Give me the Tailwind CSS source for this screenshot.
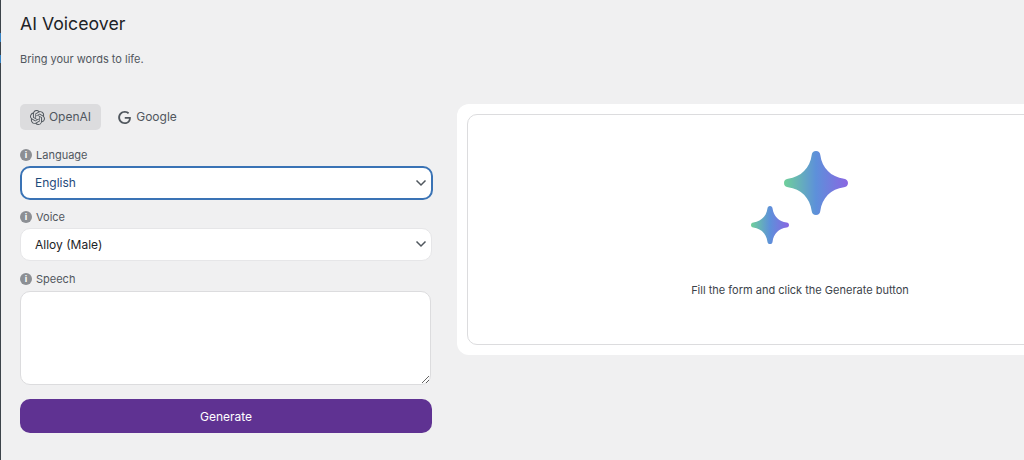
<!DOCTYPE html>
<html lang="en">
<head>
  <meta charset="UTF-8">
  <title>AI Voiceover</title>
  <script src="https://cdn.jsdelivr.net/npm/@tailwindcss/browser@4"></script>
</head>
<body class="bg-[#f0f0f1] overflow-hidden font-['Inter',sans-serif] antialiased">
<div class="flex h-[460px] w-[1024px] overflow-hidden">

  <!-- Admin menu edge -->
  <div class="w-px shrink-0 bg-[#3c434a] flex flex-col">
    <div class="h-[33px]"></div>
    <div class="h-[9px] bg-[#3582c4]"></div>
    <div class="h-[13px]"></div>
    <div class="h-[8px] bg-[#3582c4]"></div>
  </div>

  <div class="flex-1 pl-[19px] min-w-0">
    <!-- Header -->
    <h1 class="pt-[10px] text-[17.700px] leading-[28px] font-normal text-[#1d2327]">AI Voiceover</h1>
    <p class="mt-[14px] text-[11px] leading-[14px] text-[#50575e]">Bring your words to life.</p>

    <div class="mt-[38px] flex gap-[25px] items-start">
      <!-- Form column -->
      <div class="w-[412px] shrink-0">
        <div class="flex gap-[6px] text-[12px] text-[#50575e]">
          <button class="h-[26px] w-[81px] rounded-[5px] bg-[#dcdcde] flex items-center justify-center gap-[4px]">
            <svg class="w-[15px] h-[15px]" viewBox="0 0 24 24" fill="#50575e"><path d="M22.2819 9.8211a5.9847 5.9847 0 0 0-.5157-4.9108 6.0462 6.0462 0 0 0-6.5098-2.9A6.0651 6.0651 0 0 0 4.9807 4.1818a5.9847 5.9847 0 0 0-3.9977 2.9 6.0462 6.0462 0 0 0 .7427 7.0966 5.98 5.98 0 0 0 .511 4.9107 6.051 6.051 0 0 0 6.5146 2.9001A5.9847 5.9847 0 0 0 13.2599 24a6.0557 6.0557 0 0 0 5.7718-4.2058 5.9894 5.9894 0 0 0 3.9977-2.9001 6.0557 6.0557 0 0 0-.7475-7.0729zm-9.022 12.6081a4.4755 4.4755 0 0 1-2.8764-1.0408l.1419-.0804 4.7783-2.7582a.7948.7948 0 0 0 .3927-.6813v-6.7369l2.02 1.1686a.071.071 0 0 1 .038.052v5.5826a4.504 4.504 0 0 1-4.4945 4.4944zm-9.6607-4.1254a4.4708 4.4708 0 0 1-.5346-3.0137l.142.0852 4.783 2.7582a.7712.7712 0 0 0 .7806 0l5.8428-3.3685v2.3324a.0804.0804 0 0 1-.0332.0615L9.74 19.9502a4.4992 4.4992 0 0 1-6.1408-1.6464zM2.3408 7.8956a4.485 4.485 0 0 1 2.3655-1.9728V11.6a.7664.7664 0 0 0 .3879.6765l5.8144 3.3543-2.0201 1.1685a.0757.0757 0 0 1-.071 0l-4.8303-2.7865A4.504 4.504 0 0 1 2.3408 7.872zm16.5963 3.8558L13.1038 8.364 15.1192 7.2a.0757.0757 0 0 1 .071 0l4.8303 2.7913a4.4944 4.4944 0 0 1-.6765 8.1042v-5.6772a.79.79 0 0 0-.407-.667zm2.0107-3.0231l-.142-.0852-4.7735-2.7818a.7759.7759 0 0 0-.7854 0L9.409 9.2297V6.8974a.0662.0662 0 0 1 .0284-.0615l4.8303-2.7866a4.4992 4.4992 0 0 1 6.6802 4.66zM8.3065 12.863l-2.02-1.1638a.0804.0804 0 0 1-.038-.0567V6.0742a4.4992 4.4992 0 0 1 7.3757-3.4537l-.142.0805L8.704 5.459a.7948.7948 0 0 0-.3927.6813zm1.0976-2.3654l2.602-1.4998 2.6069 1.4998v2.9994l-2.5974 1.4997-2.6067-1.4997Z"/></svg>
            <span>OpenAI</span>
          </button>
          <button class="h-[26px] w-[81px] rounded-[5px] flex items-center justify-center gap-[5px]">
            <svg class="w-[13px] h-[13px]" viewBox="0 0 24 24" fill="#50575e"><path d="M12.48 10.92v3.28h7.84c-.24 1.84-.853 3.187-1.787 4.133-1.147 1.147-2.933 2.4-6.053 2.4-4.827 0-8.6-3.893-8.6-8.72s3.773-8.72 8.6-8.72c2.6 0 4.507 1.027 5.907 2.347l2.307-2.307C18.747 1.44 16.133 0 12.48 0 5.867 0 .307 5.387.307 12s5.56 12 12.173 12c3.573 0 6.267-1.173 8.373-3.36 2.16-2.16 2.84-5.213 2.84-7.667 0-.76-.053-1.467-.16-2.053H12.48z"/></svg>
            <span>Google</span>
          </button>
        </div>

        <!-- Language -->
        <label class="mt-[18px] flex items-center gap-[4px] h-[14px] text-[11px] text-[#50575e]">
          <span class="w-[12px] h-[12px] rounded-full bg-[#8c8f94] text-white text-[9px] leading-[12px] font-bold text-center">i</span>
          Language
        </label>
        <div class="relative mt-[4px]">
          <select class="appearance-none w-[413px] h-[34px] pl-[13px] rounded-[10px] bg-white border-2 border-[#3a73b5] text-[12px] text-[#1e4a7a] outline-none">
            <option>English</option>
          </select>
          <svg class="absolute right-[5px] top-[12px] w-[12px] h-[10px]" viewBox="0 0 12 10" fill="none" stroke="#50575e" stroke-width="1.5"><path d="M1.5 2.500 6 7l4.500-4.500"/></svg>
        </div>

        <!-- Voice -->
        <label class="mt-[10px] flex items-center gap-[4px] h-[14px] text-[11px] text-[#50575e]">
          <span class="w-[12px] h-[12px] rounded-full bg-[#8c8f94] text-white text-[9px] leading-[12px] font-bold text-center">i</span>
          Voice
        </label>
        <div class="relative mt-[4px]">
          <select class="appearance-none w-full h-[33px] pl-[14px] rounded-[10px] bg-white border border-[#e6e6e8] text-[12px] text-[#1d2327] outline-none">
            <option>Alloy (Male)</option>
          </select>
          <svg class="absolute right-[5px] top-[11px] w-[12px] h-[10px]" viewBox="0 0 12 10" fill="none" stroke="#50575e" stroke-width="1.5"><path d="M1.5 2.500 6 7l4.500-4.500"/></svg>
        </div>

        <!-- Speech -->
        <label class="mt-[11px] flex items-center gap-[4px] h-[14px] text-[11px] text-[#50575e]">
          <span class="w-[12px] h-[12px] rounded-full bg-[#8c8f94] text-white text-[9px] leading-[12px] font-bold text-center">i</span>
          Speech
        </label>
        <textarea class="block mt-[5px] w-[411px] h-[94px] rounded-[10px] bg-white border border-[#dcdcde] outline-none"></textarea>

        <button class="mt-[14px] w-[412px] h-[34px] pt-[2px] rounded-[10px] bg-[#5f3292] text-white text-[12px] font-normal">Generate</button>
      </div>

      <!-- Result panel -->
      <div class="w-[686px] shrink-0 h-[251px] rounded-[12px] bg-white p-[10px]">
        <div class="h-full rounded-[10px] border border-[#dcdcde] flex flex-col items-center pt-[36px]">
          <div class="flex items-start w-[98px] h-[94px]">
            <svg class="w-[38px] h-[38px] mt-[55px]" viewBox="0 0 64 64"><defs><linearGradient id="sm"><stop offset="0" stop-color="#6fd09a"/><stop offset=".5" stop-color="#5d90da"/><stop offset="1" stop-color="#8a66e2"/></linearGradient></defs><path fill="url(#sm)" d="M32 0c2.500 0 4 1.500 4.300 4C38 17 47 26 60 27.700c2.500.3 4 2 4 4.300s-1.500 4-4 4.300C47 38 38 47 36.300 60c-.3 2.500-1.800 4-4.300 4s-4-1.500-4.300-4C26 47 17 38 4 36.300 1.500 36 0 34.500 0 32s1.500-4 4-4.300C17 26 26 17 27.700 4 28 1.500 29.500 0 32 0z"/></svg>
            <svg class="w-[64px] h-[64px] -ml-[5px]" viewBox="0 0 64 64"><defs><linearGradient id="lg"><stop offset="0" stop-color="#6fd09a"/><stop offset=".5" stop-color="#5d90da"/><stop offset="1" stop-color="#8a66e2"/></linearGradient></defs><path fill="url(#lg)" d="M32 0c2.500 0 4 1.500 4.300 4C38 17 47 26 60 27.700c2.500.3 4 2 4 4.300s-1.500 4-4 4.300C47 38 38 47 36.300 60c-.3 2.500-1.800 4-4.300 4s-4-1.500-4.300-4C26 47 17 38 4 36.300 1.500 36 0 34.500 0 32s1.500-4 4-4.300C17 26 26 17 27.700 4 28 1.500 29.500 0 32 0z"/></svg>
          </div>
          <p class="mt-[38px] text-[11px] leading-[14px] text-[#3c434a]">Fill the form and click the Generate button</p>
        </div>
      </div>
    </div>
  </div>
</div>
</body>
</html>
